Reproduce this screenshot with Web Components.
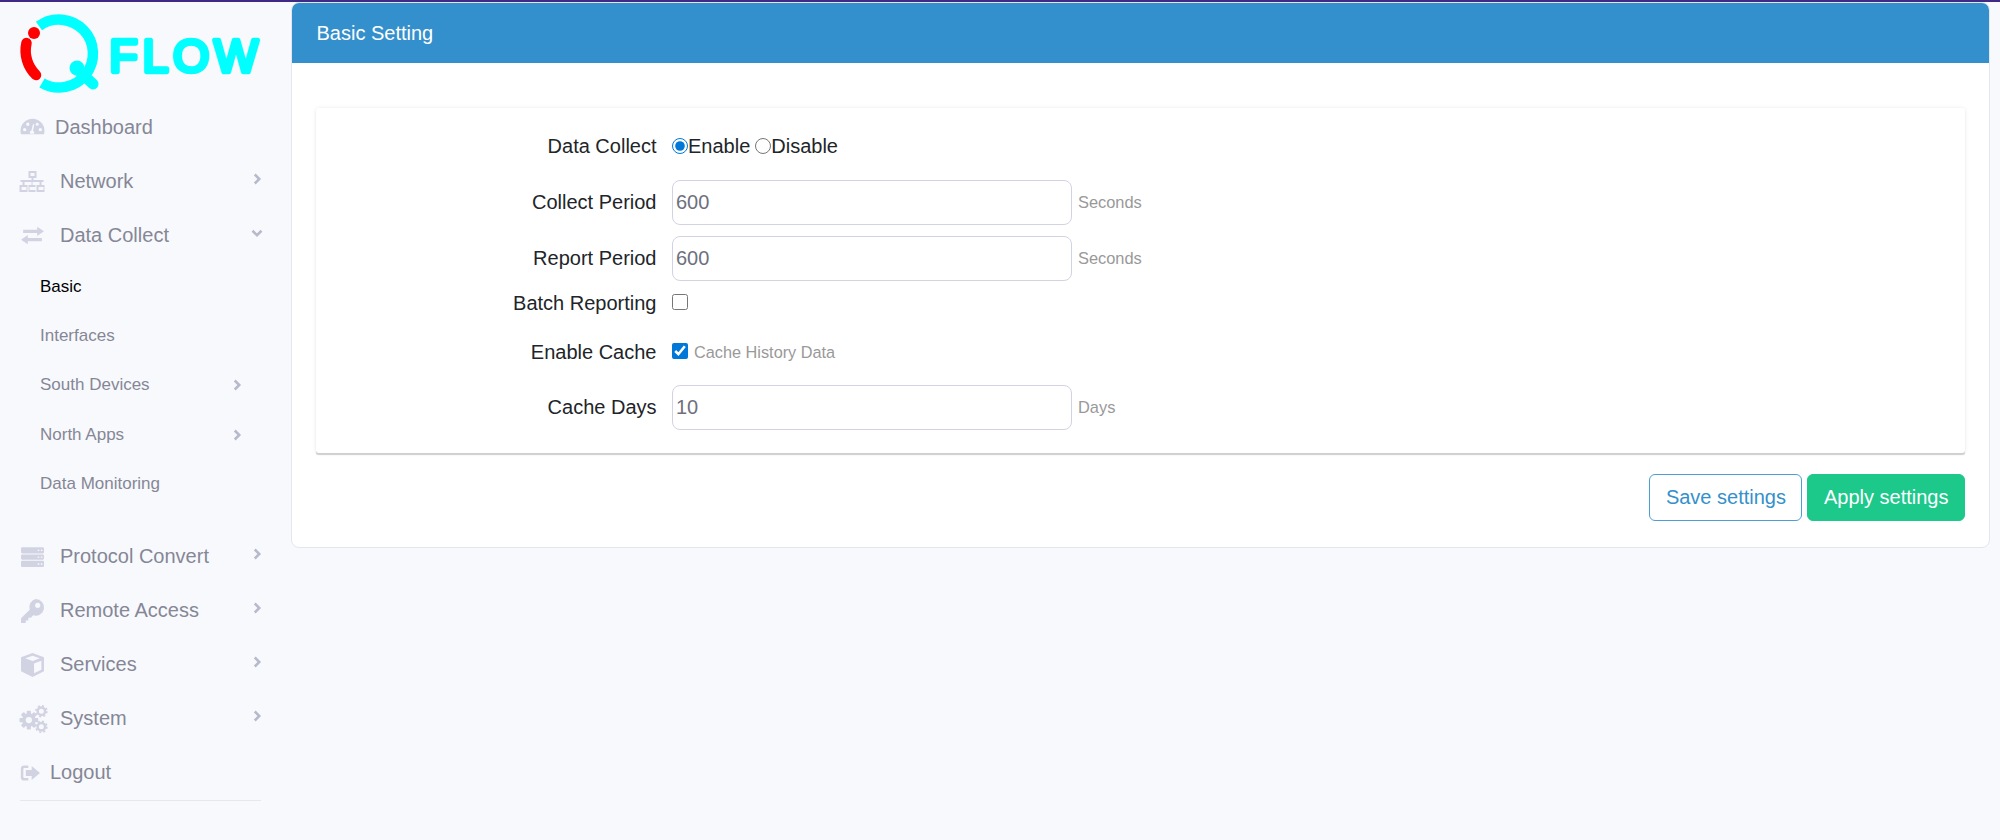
<!DOCTYPE html>
<html>
<head>
<meta charset="utf-8">
<title>Basic Setting</title>
<style>
  html, body { margin: 0; height: 100%; }
  body {
    background: #f8f9fd;
    border-top: 2px solid #3f2a86;
    box-sizing: border-box;
    font-family: "Liberation Sans", Arial, sans-serif;
    overflow: hidden;
  }
  .app { display: flex; height: 100%; }
</style>
</head>
<body>
<div class="app">
  <iq-sidebar>
    <iq-logo></iq-logo>
    <iq-nav-item icon="gauge" label="Dashboard" gap="10"></iq-nav-item>
    <iq-nav-item icon="sitemap" label="Network" arrow="right"></iq-nav-item>
    <iq-nav-item icon="exchange" label="Data Collect" arrow="down"></iq-nav-item>
    <iq-sub-menu>
      <iq-sub-item label="Basic" active></iq-sub-item>
      <iq-sub-item label="Interfaces"></iq-sub-item>
      <iq-sub-item label="South Devices" arrow></iq-sub-item>
      <iq-sub-item label="North Apps" arrow></iq-sub-item>
      <iq-sub-item label="Data Monitoring"></iq-sub-item>
    </iq-sub-menu>
    <iq-nav-item icon="server" label="Protocol Convert" arrow="right"></iq-nav-item>
    <iq-nav-item icon="key" label="Remote Access" arrow="right"></iq-nav-item>
    <iq-nav-item icon="cube" label="Services" arrow="right"></iq-nav-item>
    <iq-nav-item icon="cogs" label="System" arrow="right"></iq-nav-item>
    <iq-nav-item icon="logout" label="Logout" gap="10" small></iq-nav-item>
  </iq-sidebar>

  <iq-card heading="Basic Setting">
    <iq-form-row label="Data Collect" style="--h:56px">
      <iq-radio-pair></iq-radio-pair>
    </iq-form-row>
    <iq-form-row label="Collect Period" style="--h:56px">
      <iq-text-field value="600" suffix="Seconds"></iq-text-field>
    </iq-form-row>
    <iq-form-row label="Report Period" style="--h:57px">
      <iq-text-field value="600" suffix="Seconds"></iq-text-field>
    </iq-form-row>
    <iq-form-row label="Batch Reporting" style="--h:32px">
      <iq-check></iq-check>
    </iq-form-row>
    <iq-form-row label="Enable Cache" style="--h:66px">
      <iq-check checked note="Cache History Data"></iq-check>
    </iq-form-row>
    <iq-form-row label="Cache Days" style="--h:44px">
      <iq-text-field value="10" suffix="Days"></iq-text-field>
    </iq-form-row>
    <iq-button slot="actions" kind="outline">Save settings</iq-button>
    <iq-button slot="actions" kind="solid">Apply settings</iq-button>
  </iq-card>
</div>

<script>
const cog = (x, y) => `<g transform="translate(${x} ${y})"><circle r="3.600" fill="none" stroke="#d1d3e2" stroke-width="2.400"/><circle r="5.300" fill="none" stroke="#d1d3e2" stroke-width="1.500" stroke-dasharray="2 2.160"/></g>`

const ICONS = {
  gauge: `<path d="M12 3.500A11.500 11.500 0 0 0 .5 15c0 1.300.2 2.500.6 3.500h21.800c.4-1 .6-2.200.6-3.500A11.500 11.500 0 0 0 12 3.500zM4.500 15.700a1.600 1.600 0 1 1 0-3.200 1.600 1.600 0 0 1 0 3.200zm3-5.200a1.600 1.600 0 1 1 0-3.200 1.600 1.600 0 0 1 0 3.200zm6.700 7.500H9.800a2.300 2.300 0 0 1 1.200-3.200l1.400-6 1.400.3-1.300 5.900a2.300 2.300 0 0 1 1 3zM15 8.900a1.500 1.500 0 1 1 3 0 1.500 1.500 0 0 1-3 0zm4.500 6.800a1.600 1.600 0 1 1 0-3.200 1.600 1.600 0 0 1 0 3.200z"/>`,
  sitemap: `<path fill-rule="evenodd" d="M8 3h8v7h-3v2h10v2h-2v3h3v7h-9v-7h4v-3h-7v3h4v7H7v-7h4v-3H4v3h4v7H-1v-7h3v-3H0v-2h11v-2H8zm2 2v3h4V5zM1 19v3h5v-3zm8 0v3h6v-3zm9 0v3h5v-3z" transform="translate(0.5 -1) scale(.96)"/>`,
  exchange: `<path d="M16.500 3.500 23 8l-6.500 4.500V9.600H3V6.400h13.500zM7.500 11.500V14.400H21v3.200H7.500v2.900L1 16z"/>`,
  server: `<path fill-rule="evenodd" d="M2 3h20a1 1 0 0 1 1 1v4a1 1 0 0 1-1 1H2a1 1 0 0 1-1-1V4a1 1 0 0 1 1-1zm15 2.500v1.300h1.500V5.500zm3 0v1.300h1.500V5.500zM2 10h20a1 1 0 0 1 1 1v3a1 1 0 0 1-1 1H2a1 1 0 0 1-1-1v-3a1 1 0 0 1 1-1zm15 2v1.300h1.500V12zm3 0v1.300h1.500V12zM2 16h20a1 1 0 0 1 1 1v4a1 1 0 0 1-1 1H2a1 1 0 0 1-1-1v-4a1 1 0 0 1 1-1zm15 2.500v1.300h1.500v-1.300zm3 0v1.300h1.500v-1.300z"/>`,
  key: `<path fill-rule="evenodd" d="M15 1a8 8 0 1 1-2.400 15.600l-2.100 2.400H8v2.500H5.500V24H1v-4.500l8.300-8.300A8 8 0 0 1 15 1zm2 3.500a2.500 2.500 0 1 0 0 5 2.500 2.500 0 0 0 0-5z"/>`,
  cube: `<path fill-rule="evenodd" d="M12 1 23 5v13.500L12 24 1 18.500V5zM12 3.500 5 6l7 2.700L19 6zM13.500 11v9.500l7-3.500V8.400z"/>`,
  cogs: `<g transform="translate(8.500 13.500)"><circle r="6.500"/><rect x="-2" y="-9" width="4" height="18" rx=".8"/><rect x="-2" y="-9" width="4" height="18" rx=".8" transform="rotate(45)"/><rect x="-2" y="-9" width="4" height="18" rx=".8" transform="rotate(90)"/><rect x="-2" y="-9" width="4" height="18" rx=".8" transform="rotate(135)"/><circle r="3" fill="#f8f9fd"/></g>${cog(20.5, 5)}${cog(20.5, 20)}`,
  logout: `<path d="M10 3H5a4 4 0 0 0-4 4v10a4 4 0 0 0 4 4h5v-3H5.500A1.500 1.500 0 0 1 4 16.500v-9C4 6.700 4.700 6 5.500 6H10z"/><path d="M14 3.500 24 12l-10 8.500V15.500H7v-7h7z"/>`
}

class IqSidebar extends HTMLElement {
  constructor () {
    super()
    this.attachShadow({ mode: 'open' }).innerHTML = /* html */`
      <style>
        :host { display: block; width: 291px; flex: none; padding-top: 13px; box-sizing: border-box; }
        .nav { display: flex; flex-direction: column; }
        .rule { height: 1px; background: #e6e8f0; margin: 0 30px 0 20px; }
      </style>
      <div class="nav"><slot></slot></div>
      <div class="rule"></div>
    `
  }
}

class IqLogo extends HTMLElement {
  constructor () {
    super()
    this.attachShadow({ mode: 'open' }).innerHTML = /* html */`
      <style>
        :host { display: block; height: 85px; }
        svg { display: block; overflow: visible; }
        text { font: 46.500px "Liberation Sans", Arial, sans-serif; fill: #00ffff; stroke: #00ffff; stroke-width: 4.500px; stroke-linejoin: round; stroke-linecap: round; letter-spacing: 4.800px; }
      </style>
      <svg width="280" height="85" viewBox="0 15 280 85">
        <path d="M39 26A34 34 0 1 1 42 83" fill="none" stroke="#00ffff" stroke-width="10.500"/>
        <circle cx="77" cy="68" r="7.500" fill="#00ffff"/>
        <path d="M77 69 93 84" stroke="#00ffff" stroke-width="11" stroke-linecap="round"/>
        <path d="M26.500 43A34 34 0 0 0 36 75" fill="none" stroke="#ff0000" stroke-width="10.500" stroke-linecap="round"/>
        <circle cx="34" cy="33" r="6" fill="#ff0000"/>
        <text x="109" y="72">FLOW</text>
      </svg>
    `
  }
}

class IqNavItem extends HTMLElement {
  constructor () {
    super()
    const arrow = this.getAttribute('arrow')
    const gap = this.getAttribute('gap') || '15'
    const path = arrow === 'down' ? 'M2 5l6 6 6-6' : 'M5 2l6 6-6 6'
    this.attachShadow({ mode: 'open' }).innerHTML = /* html */`
      <style>
        :host { display: flex; align-items: center; height: 54px; padding: 0 28px 0 20px; font-size: 20px; color: #858796; }
        svg.icon { width: 25px; height: 25px; fill: #d1d3e2; flex: none; overflow: visible; }
        :host([small]) svg.icon { width: 20px; height: 20px; }
        span { margin-left: ${gap}px; flex: 1; white-space: nowrap; }
        svg.arrow { width: 12px; height: 12px; fill: none; stroke: #b7b9cc; stroke-width: 3.400; margin-top: -5px; flex: none; }
      </style>
      <svg class="icon" viewBox="0 0 24 24">${ICONS[this.getAttribute('icon')]}</svg>
      <span>${this.getAttribute('label')}</span>
      ${arrow ? `<svg class="arrow" viewBox="0 0 16 16"><path d="${path}"/></svg>` : ''}
    `
  }
}

class IqSubMenu extends HTMLElement {
  constructor () {
    super()
    this.attachShadow({ mode: 'open' }).innerHTML = /* html */`
      <style>
        :host { display: block; margin-bottom: 21px; }
      </style>
      <slot></slot>
    `
  }
}

class IqSubItem extends HTMLElement {
  constructor () {
    super()
    const arrow = this.hasAttribute('arrow')
    this.attachShadow({ mode: 'open' }).innerHTML = /* html */`
      <style>
        :host { display: flex; align-items: center; height: 49.400px; padding: 0 48px 0 40px; font-size: 17px; color: #858796; }
        :host([active]) { color: #000; }
        span { flex: 1; white-space: nowrap; }
        svg { width: 12px; height: 12px; fill: none; stroke: #b7b9cc; stroke-width: 3.400; flex: none; }
      </style>
      <span>${this.getAttribute('label')}</span>
      ${arrow ? '<svg viewBox="0 0 16 16"><path d="M5 2l6 6-6 6"/></svg>' : ''}
    `
  }
}

class IqCard extends HTMLElement {
  constructor () {
    super()
    this.attachShadow({ mode: 'open' }).innerHTML = /* html */`
      <style>
        :host { display: block; flex: 1; margin: 0 10px 0 0; align-self: flex-start; background: #fff; border: 1px solid #e3e6f0; border-radius: 8px; overflow: hidden; box-sizing: border-box; }
        header { height: 60px; background: #3490cc; color: #fff; font-size: 20px; display: flex; align-items: center; padding: 0 24.500px; }
        .body { padding: 45px 24px 0; }
        .panel { padding: 10px 0 24px; border-radius: 3px; background: #fff; box-shadow: 0 2px 1px -0.500px #cfcfcf, 0 0 4px rgba(0,0,0,.08); }
        .actions { display: flex; justify-content: flex-end; gap: 5px; padding: 21px 0 26px; }
      </style>
      <header>${this.getAttribute('heading')}</header>
      <div class="body">
        <div class="panel"><slot></slot></div>
        <div class="actions"><slot name="actions"></slot></div>
      </div>
    `
  }
}

class IqFormRow extends HTMLElement {
  constructor () {
    super()
    this.attachShadow({ mode: 'open' }).innerHTML = /* html */`
      <style>
        :host { display: flex; align-items: center; height: var(--h, 56px); gap: 15.500px; font-size: 20px; color: #212529; }
        label { width: 340.500px; text-align: right; flex: none; white-space: nowrap; }
      </style>
      <label>${this.getAttribute('label')}</label>
      <slot></slot>
    `
  }
}

class IqTextField extends HTMLElement {
  constructor () {
    super()
    this.attachShadow({ mode: 'open' }).innerHTML = /* html */`
      <style>
        :host { display: flex; align-items: center; gap: 6px; }
        input { width: 400px; height: 45px; box-sizing: border-box; border: 1.500px solid #d1d3e2; border-radius: 8px; padding: 0 3px; font: 20px "Liberation Sans", Arial, sans-serif; color: #6e707e; background: #fff; outline: none; }
        small { font-size: 16.400px; color: #999; }
      </style>
      <input type="text" value="${this.getAttribute('value')}">
      <small>${this.getAttribute('suffix')}</small>
    `
  }
}

class IqRadioPair extends HTMLElement {
  constructor () {
    super()
    this.attachShadow({ mode: 'open' }).innerHTML = /* html */`
      <style>
        :host { display: flex; align-items: center; font-size: 20px; color: #212529; }
        input { width: 16px; height: 16px; margin: 0; accent-color: #0078d7; }
        label { display: flex; align-items: center; }
      </style>
      <label><input type="radio" name="collect" checked>Enable</label>
      <label style="margin-left:5px"><input type="radio" name="collect">Disable</label>
    `
  }
}

class IqCheck extends HTMLElement {
  constructor () {
    super()
    const note = this.getAttribute('note')
    this.attachShadow({ mode: 'open' }).innerHTML = /* html */`
      <style>
        :host { display: flex; align-items: center; gap: 6px; margin-top: -2px; }
        input { width: 16px; height: 16px; margin: 0; accent-color: #0078d7; }
        small { font-size: 16.300px; color: #999; position: relative; top: 1px; }
      </style>
      <input type="checkbox" ${this.hasAttribute('checked') ? 'checked' : ''}>
      ${note ? `<small>${note}</small>` : ''}
    `
  }
}

class IqButton extends HTMLElement {
  constructor () {
    super()
    this.attachShadow({ mode: 'open' }).innerHTML = /* html */`
      <style>
        :host { display: block; }
        button { height: 47px; padding: 0 15.500px; border-radius: 6px; font: 20px "Liberation Sans", Arial, sans-serif; box-sizing: border-box; }
        :host([kind=outline]) button { background: #fff; color: #3490cc; border: 1.500px solid #4d9ed4; }
        :host([kind=solid]) button { background: #1cc88a; color: #fff; border: 1px solid #1cc88a; }
      </style>
      <button type="button"><slot></slot></button>
    `
  }
}

customElements.define('iq-sidebar', IqSidebar)
customElements.define('iq-logo', IqLogo)
customElements.define('iq-nav-item', IqNavItem)
customElements.define('iq-sub-menu', IqSubMenu)
customElements.define('iq-sub-item', IqSubItem)
customElements.define('iq-card', IqCard)
customElements.define('iq-form-row', IqFormRow)
customElements.define('iq-text-field', IqTextField)
customElements.define('iq-radio-pair', IqRadioPair)
customElements.define('iq-check', IqCheck)
customElements.define('iq-button', IqButton)
</script>
</body>
</html>
